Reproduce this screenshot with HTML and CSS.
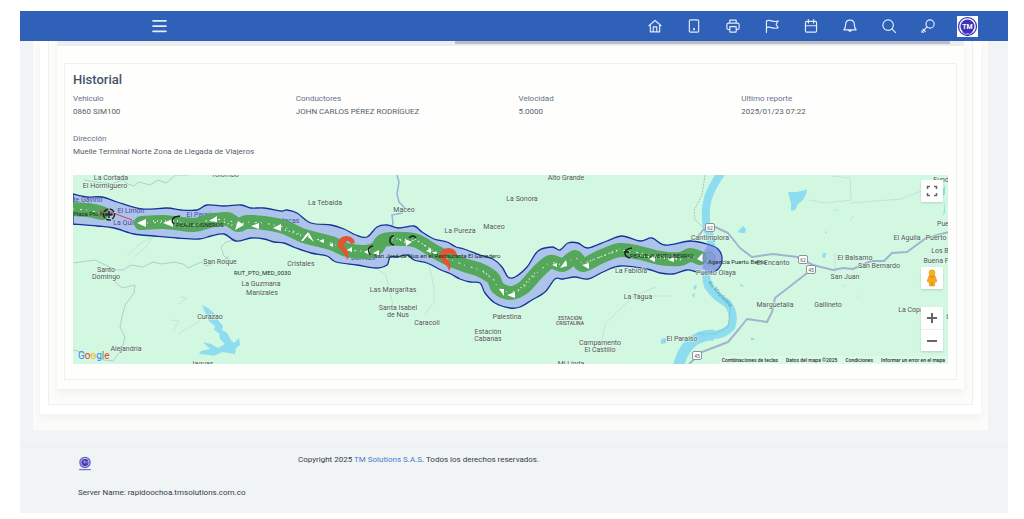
FILE: index.html
```html
<!DOCTYPE html>
<html lang="es">
<head>
<meta charset="utf-8">
<meta name="viewport" content="width=device-width, initial-scale=1">
<title>Historial</title>
<link rel="stylesheet" href="styles.css">
</head>
<body>
<div class="app">
  <header class="topbar">
    <button class="icon-btn menu" aria-label="Menú"><svg viewBox="0 0 24 24"><path d="M1 3h22M1 12h22M1 21h22" stroke-width="3"/></svg></button>
    <nav class="tools" aria-label="Herramientas">
      <button class="icon-btn" aria-label="Inicio"><svg viewBox="0 0 24 24"><path d="M1.5 11.5L12 2.5l10.500 9M4 9.500V22h16V9.500M9 22v-8.500h6V22"/></svg></button>
      <button class="icon-btn" aria-label="Dispositivo"><svg viewBox="0 0 24 24"><rect x="4" y="1.500" width="16" height="21" rx="2"/><path d="M12 16.500v1.500" stroke-width="3"/></svg></button>
      <button class="icon-btn" aria-label="Imprimir"><svg viewBox="0 0 24 24"><path d="M6.500 7V2h11v5M6 18H4a2.500 2.500 0 0 1-2.500-2.500V10A3 3 0 0 1 4.500 7h15a3 3 0 0 1 3 3v5.500A2.500 2.500 0 0 1 20 18h-2"/><rect x="6.500" y="13" width="11" height="9.500" rx="1"/></svg></button>
      <button class="icon-btn" aria-label="Bandera"><svg viewBox="0 0 24 24"><path d="M2.500 23V3.500c6-4 11 3.500 20 0L19 9l3.500 6c-9 3.500-14-4-20 0"/></svg></button>
      <button class="icon-btn" aria-label="Calendario"><svg viewBox="0 0 24 24"><rect x="2.500" y="4" width="19" height="18.500" rx="2"/><path d="M2.500 11.500h19M7.500 1v6M16.500 1v6"/></svg></button>
      <button class="icon-btn" aria-label="Notificaciones"><svg viewBox="0 0 24 24"><path d="M1.500 18.500h21c-3-2.500-3-5-3-8.500C19.500 5 16.500 2 12 2S4.500 5 4.500 10c0 3.500 0 6-3 8.500zM9.500 19a2.600 2.600 0 0 0 5 0"/></svg></button>
      <button class="icon-btn" aria-label="Buscar"><svg viewBox="0 0 24 24"><circle cx="10.500" cy="10.500" r="9"/><path d="M17 17l6.500 6.500"/></svg></button>
      <button class="icon-btn" aria-label="Llave"><svg viewBox="0 0 24 24"><circle cx="15.500" cy="8.500" r="7"/><path d="M10.500 13.500L1.500 22.500M3.500 17.500l4 4M1.500 20.500l2.500 2.500"/></svg></button>
      <button class="icon-btn avatar" aria-label="Perfil"><svg viewBox="0 0 42 42"><circle cx="21" cy="21" r="18" fill="none" stroke="#3d35b5" stroke-width="2.500"/><circle cx="21" cy="21" r="14" fill="#3d35b5"/><path d="M12 33l9 4 9-4" stroke="#3d35b5" stroke-width="2" fill="none"/><text class="logo-text" x="21" y="26">TM</text></svg></button>
    </nav>
  </header>

  <main class="content">
    <section class="shell">
      <div class="outer-card">
        <div class="outer-frame">
          <div class="card">
            <div class="scroll-track"><div class="scroll-thumb"></div></div>
            <article class="history">
              <h2>Historial</h2>
              <dl class="facts">
                <div><dt>Vehiculo</dt><dd>0860 SIM100</dd></div>
                <div><dt>Conductores</dt><dd>JOHN CARLOS PÉREZ RODRÍGUEZ</dd></div>
                <div><dt>Velocidad</dt><dd>5.0000</dd></div>
                <div><dt>Ultimo reporte</dt><dd>2025/01/23 07:22</dd></div>
                <div class="wide"><dt>Dirección</dt><dd>Muelle Terminal Norte Zona de Llegada de Viajeros</dd></div>
              </dl>
              <div class="map">
                <svg class="map-canvas" viewBox="73 175 875 189" preserveAspectRatio="xMidYMid slice" role="img" aria-label="Mapa del recorrido">
                  <rect class="land" x="-1000" y="-200" width="3000" height="900"/>
                  <g class="relief">
                    <path d="M127 256l14-13 12-6-9 12-10 8M180 297l7 1-8 6M171 320l8 1-6 10M178 334l22-13M227 220l5 7M850 222l3-6M842 284l3 3M857 295l2 3"/>
                  </g>
                  <g class="minor-road">
                    <path d="M84 180l12 2 15 2 12-4 5 4 6 2 5-4 11 3 8-5 8 3 10-8 13 0 5-5 14-3"/>
                    <path d="M73 263l22-3 6 3 15 7 7 0 8-5 12 2 10-5 9 2 12-2 9 2 5 4 13-6 6 4 8-3 7-1 7-6"/>
                    <path d="M230 260l-6-4-3-9 5-5 8-2M115 282l7 6 13-3-1 8-9 12-3 12-2 10 5 10-3 12-9 12-9-1-9-4-8-2-13-4-8 2"/>
                  </g>
                  <g class="minor-road faint">
                    <path d="M374 267l12 8 3 15 4 15M429 265l5 22 0 15-9 13M832 176l18 2 1 22-26 3-16-3M851 203l50-4 20-8M835 253l0 20M600 351l5-27 15-15 14-13 22-9M643 296l30 0"/>
                  </g>
                  <path class="stream" d="M397 175l2 7-2 12 2 8 6 6-3 5-10 2 1 8-4 10"/>
                  <path class="river" d="M722 172Q712 186 708 198Q704 212 707 228Q714 244 709 258Q704 274 708 286Q716 298 727 303Q736 314 731 327Q724 335 712 335"/>
                  <path class="river wide-river" d="M714 335Q700 335 692 342Q682 350 678 368"/>
                  <g class="water">
                    <path d="M788 192l9 0 8-2 2-1-1 5-3 6-5 4-3 6-4 1 0-7zM738 231l5-5 3 3-1 4-5 0zM739 283l5 3-2 1zM823 253l3 0-1 5-3-1zM825 232l2-1-1 3zM832 211l6-2 0 1zM751 338h3v2h-3zM661 339l5-1 0 5-5 1zM695 285l2 1-2 4-2-2zM692 295l3-2-1 5zM945 185l-3 7 0 5 3-3M944 210l1-10 0 12-2 4z"/>
                    <path d="M202 305l6 3 6 5 4 7 5 6-1 4 5 3 4 7 3 3 5-5 1 7-4 3-1 6-13-2-8 4-5-1-10-1 2-3 9-2-4-4-3-3 8 2 7 4 7-4-5-5-1-6-5-3 1-4-6-5z"/>
                  </g>
                  <path class="river-edge" d="M705 175l-3 20-8 16 1 9 9 8M731 305l-3 22-13 7-18 0"/>
                  <g class="road">
                    <path d="M677 252l7-9 12-4 7-9 12-3 13 6 12 15 12 9 21-3 24 3 16 8 20 5 10-2 10 1 18-8 13 0 8-8 15-1 19-14 23-6"/>
                    <path d="M811 270l-36 28-3 14-5 10-20-3-8 10-11 13-26 10-13 12"/>
                  </g>
                  <path class="corridor" id="corridor"/>
                  <g class="town">
                    <text x="111" y="180">La Cortada</text><text x="105" y="188">El Hormiguero</text><text x="225" y="177">Yolombó</text>
                    <text x="86" y="202" class="violet">nte Gavino</text><text x="131" y="213" class="violet">El Limón</text><text x="124" y="225" class="violet">La Quil</text><text x="202" y="217" class="violet">El Paraíso</text><text x="285" y="223" class="violet">chotacas</text>
                    <text x="325" y="205">La Tebaida</text><text x="404" y="212">Maceo</text><text x="566" y="180">Alto Grande</text><text x="522" y="201">La Sonora</text><text x="460" y="233">La Pureza</text><text x="494" y="229">Maceo</text>
                    <text x="220" y="264">San Roque</text><text x="106" y="272">Santo</text><text x="106" y="279">Domingo</text><text x="301" y="266">Cristales</text><text x="261" y="286">La Guzmana</text><text x="262" y="295">Manizales</text>
                    <text x="210" y="319">Curazao</text><text x="126" y="351">Alejandría</text><text x="202" y="366">Jaguas</text><text x="393" y="292">Las Margaritas</text><text x="398" y="310">Santa Isabel</text><text x="398" y="317">de Nus</text><text x="427" y="325">Caracolí</text>
                    <text x="507" y="319">Palestina</text><text x="488" y="334">Estación</text><text x="488" y="341">Cabanas</text><text x="570" y="320" class="district">ESTACIÓN</text><text x="570" y="325" class="district">CRISTALINA</text><text x="600" y="345">Campamento</text><text x="600" y="352">El Castillo</text><text x="571" y="366">Mi Linda</text>
                    <text x="631" y="273">La Fabiola</text><text x="638" y="299">La Tagua</text><text x="682" y="341">El Paraiso</text><text x="710" y="240">Cantimplora</text><text x="716" y="275">Puerto Olaya</text><text x="773" y="265">El Encanto</text><text x="775" y="307">Marguetalia</text><text x="828" y="307">Gallineto</text>
                    <text x="855" y="260">El Balsamo</text><text x="879" y="268">San Bernardo</text><text x="845" y="279">San Juan</text><text x="907" y="240">El Aguila</text><text x="936" y="240">Puerto</text><text x="943" y="226">Pue</text><text x="943" y="182">Funda</text><text x="940" y="253">Los B</text><text x="936" y="263">Buena F</text><text x="911" y="312">La Copa</text><text x="950" y="319">La</text><text x="363" y="260" class="violet">Del Nus</text>
                    <text class="river-name" transform="translate(719 295) rotate(48)">Río Magdalena</text>
                  </g>
                  <g class="track"><path id="track-west"/><path id="track"/></g>
                  <path class="dashes" d="M73 209l15 1 12 3M147 223l25-1 22 3 15-5 18-1 11 6 9-3 17 1 20 4 20 9 27 7 16 7 24 2M392 240l12-1 13 2 17 10 15 8 15 6 16 5 13 8 5 10 12 5 13-5 14-15 13-11 13 3 12-8 8 7 17-7 20-7 20 3 20 3 20 3 25-4"/>
                  <path class="dashes fine" d="M153 221h28M224 222l10 4M285 230l18 6M393 237l12 5M415 239l18 12M483 271l8 7M518 291l17-18M590 261l30-12M640 256l43 4"/>
                  <g class="arrows"><path d="M137 223l9-4v8zM163 223l10-4v8zM209 221l8-5v6zM235 230l3-9 6 4zM251 226l8-3v6zM273 228l8-4v7zM303 241l6-7-1-2-7 9zM309 233l5 9-6-5zM319 241l5-2v4zM329 245l4-2v4zM347 250l5-3v5zM364 252l6-3v6zM373 253l6-3v6zM406 246l-1-7 7 3zM426 251l5-3v5zM432 252l5 0-1 3zM499 289l5 0 0 7zM507 295l8-3v6zM552 265l5-2v4zM560 268l6-8 1 6zM582 265l7-2v6zM649 259l6-3v6zM668 260l6-3v5zM697 259l6-6 0 9z"/></g>
                  <g class="pins"><path d="M347 260c-1-7-9-10-9-16a8.500 7.500 0 0 1 17-1l-4 1a3.500 3.500 0 1 0-5 4c2 4 4 8 1 12zM449 271c-1-7-9-9-9-15a8.500 7.500 0 0 1 17-1l-4 1a3.500 3.500 0 1 0-5 4c2 3 4 8 1 11z"/></g>
                  <path class="red-line" d="M100 217v-6h8l24 9"/>
                  <g class="posts"><circle cx="109" cy="214.500" r="5.500" stroke-dasharray="5 1.500"/><path d="M109 211v7M105.500 214.500h7M174 224q-4-4 1-7l5-1M370 255q-4-8 3-9M394 245c-6-1-5-9 0-9M409 238q4-4 7 0M630 258c-7-2-7-9 2-10M629 252h-5"/></g>
                  <path class="end-zone" d="M708 244l9 3 5 9-2 12-9 5-8-4-1-14z"/><circle class="stop" cx="709" cy="258" r="6"/>
                  <g class="place">
                    <text x="73" y="216" class="left">Plaza Pto Nare</text><text x="176" y="227" class="left">PEAJE CISNEROS</text><text x="234" y="275" class="left">RUT_PTO_MED_0030</text><text x="374" y="258" class="left">San José de Nus en el Restaurante El Ganadero</text><text x="630" y="258" class="left">PEAJE PUERTO BERRIO</text><text x="708" y="264" class="left">Agencia Puerto Berrio</text>
                  </g>
                  <g class="shield"><rect x="705.500" y="223.500" width="9" height="8" rx="1.500"/><rect x="798.500" y="255.500" width="9" height="8" rx="1.500"/><rect x="806.500" y="265.500" width="9" height="8" rx="1.500"/><rect x="692.500" y="351.500" width="9" height="8" rx="1.500"/><text x="710" y="229.500">62</text><text x="803" y="261.500">62</text><text x="811" y="271.500">45</text><text x="697" y="357.500">45</text></g>
                </svg>
                <div class="google"><span class="b">G</span><span class="r">o</span><span class="y">o</span><span class="b">g</span><span class="g">l</span><span class="r">e</span></div>
                <div class="map-controls">
                  <button class="map-btn" aria-label="Pantalla completa"><svg viewBox="0 0 22 22"><path d="M6.500 9V6.500H9M13 6.500h2.500V9M15.500 13v2.500H13M9 15.500H6.500V13"/></svg></button>
                  <button class="map-btn person" aria-label="Street View"><svg viewBox="0 0 22 22"><path d="M8 8.500h6l2 6-2 .500-.500 4h-5l-.500-4-2-.500z" fill="#f5a91b" stroke="#d99018" stroke-width=".5"/><circle cx="11" cy="5.800" r="3" fill="#fbb31c" stroke="#d78d14" stroke-width=".5"/><path d="M9 9l2 2 2-2M11 15v3.500" stroke="#c77b10" stroke-width=".7" fill="none"/></svg></button>
                  <div class="zoom-pair">
                    <button class="map-btn" aria-label="Acercar"><svg viewBox="0 0 22 22"><path d="M6 11h10M11 6v10" stroke-width="2"/></svg></button>
                    <button class="map-btn" aria-label="Alejar"><svg viewBox="0 0 22 22"><path d="M6 11h10" stroke-width="2"/></svg></button>
                  </div>
                </div>
                <div class="map-legal"><button>Combinaciones de teclas</button><span>Datos del mapa ©2025</span><a href="#">Condiciones</a><a href="#">Informar un error en el mapa</a></div>
              </div>
            </article>
          </div>
        </div>
      </div>
    </section>
  </main>

  <footer class="footer">
    <div class="footer-row">
      <svg class="footer-logo" viewBox="0 0 24 28" role="img" aria-label="TM"><circle cx="12" cy="12" r="9.500" fill="#cbc9ee" stroke="#6761c8" stroke-width="2.500"/><circle cx="12" cy="12" r="6.500" fill="#3d35b5"/><path d="M8 9.500h5M10.500 9.500v5M12 14v-4l2 2 2-2v4" fill="none" stroke="#cbc9ee"/><path d="M1 25.500h22" stroke="#6761c8" stroke-width="2"/></svg>
      <p>Copyright 2025 <a href="#">TM Solutions S.A.S</a>. Todos los derechos reservados.</p>
    </div>
    <p class="server">Server Name: rapidoochoa.tmsolutions.com.co</p>
  </footer>
</div>
<script src="route.js"></script>
</body>
</html>
```
FILE: route.js
```js
// Geofence outline and vehicle track, drawn as smoothed curves through their points.
const corridor = '73,194 87,197 102,197 117,202 142,209 167,208 181,210 197,210 207,205 224,206 241,205 251,208 264,208 281,211 287,210 297,213 311,223 331,225 344,229 356,235 367,237 377,227 387,225 399,228 414,226 422,232 434,239 447,242 456,247 464,249 480,255 493,259 502,267 508,277 515,277 527,267 538,251 552,247 560,250 568,243 578,243 588,248 607,241 622,236 640,241 652,238 665,245 690,241 707,244 718,249 722,258 719,268 710,273 697,272 687,270 673,274 660,273 647,269 620,266 603,272 588,279 575,277 563,279 555,279 545,292 532,300 520,307 510,308 495,303 485,293 480,283 470,282 460,279 451,274 441,270 427,263 414,260 407,255 397,257 390,257 387,265 376,268 357,265 336,262 327,256 311,253 296,248 284,243 274,242 264,239 251,238 236,241 224,234 211,236 199,239 177,238 154,236 134,234 114,228 97,226 73,224';
const trackWest = '73,209 88,210 102,213';
const track = '141,223 164,222 194,225 209,221 227,219 238,225 247,222 264,223 284,227 304,236 331,243 347,250 365,252 376,249 384,240 404,239 417,241 434,251 449,259 464,265 480,270 493,278 498,288 510,293 523,288 537,273 550,262 563,265 575,257 583,265 600,257 620,250 640,253 660,258 680,259 690,255 700,258';

function smooth(text) {
  const p = text.split(' ').map(s => s.split(',').map(Number));
  let d = `M${p[0]}`;
  for (let i = 0; i < p.length - 1; i++) {
    const a = p[i - 1] || p[i], b = p[i], c = p[i + 1], e = p[i + 2] || c;
    d += `C${b[0] + (c[0] - a[0]) / 6},${b[1] + (c[1] - a[1]) / 6} ${c[0] - (e[0] - b[0]) / 6},${c[1] - (e[1] - b[1]) / 6} ${c}`;
  }
  return d;
}

document.getElementById('corridor').setAttribute('d', smooth(corridor) + 'Z');
document.getElementById('track-west').setAttribute('d', smooth(trackWest));
document.getElementById('track').setAttribute('d', smooth(track));
```
FILE: styles.css
```css
* { box-sizing: border-box; }
body { margin: 0; padding: 11px 16px 6px 20px; background: #fff; color: #565f6b; font: 8px/12px Roboto, sans-serif; }
h2, p, dl, dd { margin: 0; }
button { padding: 0; border: 0; background: none; color: inherit; font: inherit; cursor: pointer; }
a { color: #4a7bd0; text-decoration: none; }
svg { display: block; }

.app { background: #f0f4f5; }

/* Top bar */
.topbar { display: flex; align-items: center; justify-content: space-between; height: 30px; padding: 0 30px 0 132px; background: #2f61b9; }
.icon-btn { width: 14px; height: 14px; }
.icon-btn svg { width: 100%; height: 100%; fill: none; stroke: #e4ecfa; stroke-width: 2; stroke-linecap: round; stroke-linejoin: round; }
.icon-btn.menu { width: 15px; }
.tools { display: flex; align-items: center; gap: 25px; }
.icon-btn.avatar { width: 21px; height: 21px; margin-left: -3px; background: #fff; }
.icon-btn.avatar svg { stroke: none; }
.icon-btn .logo-text { fill: #fff; stroke: none; font: bold 14px Roboto, sans-serif; text-anchor: middle; }

/* Nested cards */
.content { padding: 0 20px 16px 13px; }
.shell { padding: 0 7px 16px; background: #fbfbfa; }
.outer-card { padding: 0 8px 9px; background: #fff; box-shadow: 0 4px 8px #0000000a; }
.outer-frame { padding: 0 8px 15px; border: 1px solid #eeeff0; border-top: 0; background: #fcfcfb; }
.card { padding: 0 7px 9px; background: #fefefd; box-shadow: 0 4px 8px #0000000d; }
.scroll-track { height: 5px; margin: 0 -7px 17px; padding: 0 14px 0 398px; background: #ebedee; }
.scroll-thumb { height: 3px; background: #b9bdc4; }
.history { padding: 8px 8px 15px; border: 1px solid #eff0f0; }
.history h2 { color: #47536b; font-size: 13px; font-weight: 500; line-height: 16px; }

.facts { display: grid; grid-template-columns: repeat(4, 1fr); gap: 14px 16px; padding: 4px 0 17px; }
.facts dt, .facts dd { line-height: 13px; }
.facts dt { color: #64728a; }
.facts .wide { grid-column: 1 / -1; }

/* Map */
.map { position: relative; height: 189px; overflow: hidden; background: #d2f8e1; }
.map-canvas { width: 100%; height: 100%; }
.land { fill: #d2f8e1; }
.relief path { fill: none; stroke: #c0e8d1; stroke-width: 1; }
.minor-road path { fill: none; stroke: #b0cfc8; stroke-width: 1; stroke-linejoin: round; }
.minor-road.faint path { stroke: #c3e4d5; }
.stream { fill: none; stroke: #8fb5dd; stroke-width: 1.5; }
.water path { fill: #8edcf0; }
.river { fill: none; stroke: #8edcf0; stroke-width: 8; }
.wide-river { stroke-width: 11; }
.river-edge { fill: none; stroke: #90aeb4; stroke-width: .7; stroke-dasharray: 2 1; }
.road path { fill: none; stroke: #9fb4cf; stroke-width: 2; stroke-linejoin: round; }
.corridor { fill: #a9c0e9; fill-opacity: .93; stroke: #17329a; stroke-width: 1.3; stroke-linejoin: round; }
.track path { fill: none; stroke: #55a75b; stroke-width: 14; stroke-linecap: round; stroke-linejoin: round; }
.dashes { fill: none; stroke: #e3f5e3; stroke-width: 1; stroke-dasharray: 1 6 2 4; }
.dashes.fine { stroke-width: 1.5; stroke-dasharray: 1 3; }
.arrows path { fill: #fff; }
.pins path { fill: #df5634; }
.red-line { fill: none; stroke: #d83b53; stroke-width: 1; }
.posts { fill: none; stroke: #17271e; stroke-width: 1.5; }
.end-zone { fill: #5d78df; fill-opacity: .4; }
.stop { fill: #7a9dce; fill-opacity: .7; stroke: #8192b0; }
.map-canvas text { font: 7px Roboto, sans-serif; text-anchor: middle; fill: #4b5754; stroke: #e2faeb; stroke-width: 1px; paint-order: stroke; }
.map-canvas .violet { fill: #5148a8; stroke: none; }
.map-canvas .district { font-size: 5px; font-weight: 500; }
.map-canvas .river-name { font-size: 5px; fill: #3f98af; stroke: none; }
.map-canvas .left { font-size: 6px; text-anchor: start; fill: #1f2b26; stroke: none; }
.shield rect { fill: #fff; stroke: #8b9299; stroke-width: 1; }
.map-canvas .shield text { font-size: 5px; stroke: none; }

.google { position: absolute; left: 5px; bottom: 0; font: 10px/16px Roboto, sans-serif; }
.google .b { color: #4285f4; }
.google .r { color: #ea4335; }
.google .y { color: #fbbc05; }
.google .g { color: #34a853; }

.map-controls { position: absolute; top: 5px; right: 5px; bottom: 13px; display: flex; flex-direction: column; gap: 18px; }
.map-btn { display: block; width: 22px; height: 22px; background: #fff; box-shadow: 0 1px 2px #00000026; }
.map-btn svg { width: 22px; height: 22px; fill: none; stroke: #666; stroke-width: 1.5; }
.person { margin-top: auto; }
.zoom-pair .map-btn + .map-btn { border-top: 1px solid #eee; }
.map-legal { position: absolute; right: 0; bottom: 0; display: flex; gap: 8px; padding: 0 3px; background: #e3f8eb99; color: #25302a; font-size: 5px; font-weight: 500; line-height: 8px; }
.map-legal a { color: inherit; }

/* Footer */
.footer { padding: 7px 58px 14px; border-top: 1px solid #ecf0f0; color: #353d46; }
.footer-row { display: grid; grid-template-columns: 220px 1fr; align-items: start; }
.footer-logo { width: 14px; height: 15px; margin-top: 2px; }
.server { padding-top: 16px; }
```
